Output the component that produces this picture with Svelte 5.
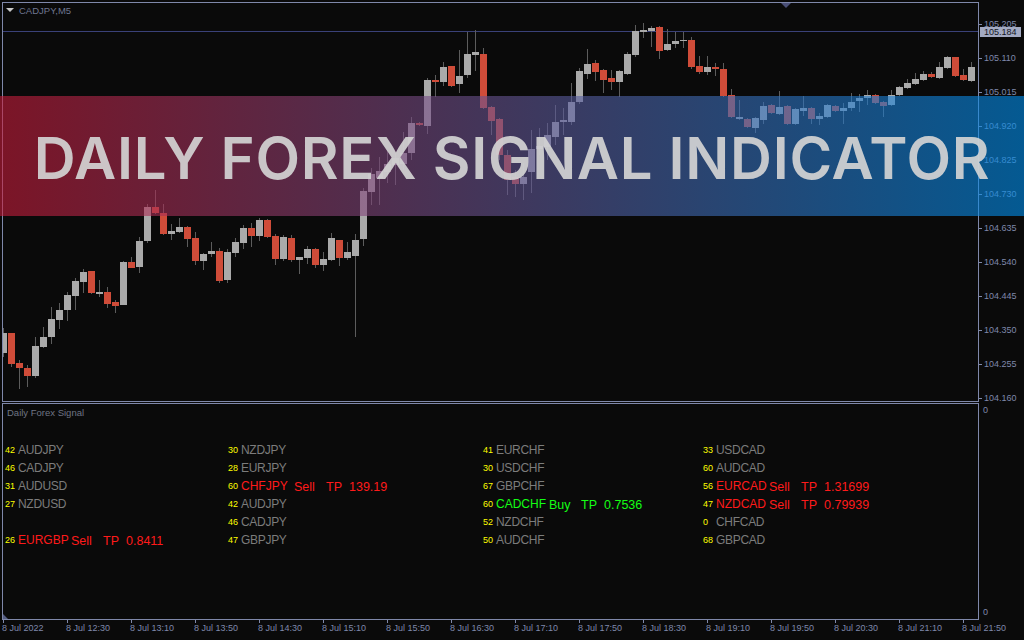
<script>
	// [bodyTop, bodyBottom, wickTop, wickBottom, isRed], one candle every 8px from x=0
	const candles = [
		[333,353,328,357,0],[333,364,333,367,1],[363,368,360,389,1],[368,376,365,387,1],[346,376,337,378,0],
		[337,347,327,348,0],[319,337,307,344,0],[310,320,303,329,0],[295,310,292,321,0],[281,296,278,310,0],
		[272,282,269,293,0],[271,293,271,294,1],[292,294,280,297,0],[292,304,287,308,1],[302,306,300,313,1],
		[262,305,261,305,0],[262,268,257,268,1],[241,267,237,273,0],[207,241,204,243,0],[207,213,190,214,1],
		[213,234,204,235,1],[231,234,224,240,0],[227,232,218,233,0],[227,239,226,247,1],[238,261,232,265,1],
		[254,261,253,270,0],[251,254,242,257,0],[251,281,248,283,1],[252,280,249,283,0],[242,253,238,257,0],
		[228,243,225,249,0],[228,236,223,247,1],[220,236,218,241,0],[220,237,219,238,1],[236,259,234,265,1],
		[237,259,235,261,0],[238,260,235,262,1],[257,260,257,274,0],[249,258,246,264,0],[249,265,248,268,1],
		[259,265,252,271,0],[238,260,233,261,0],[240,258,240,266,1],[252,258,242,260,0],[240,256,234,337,0],
		[191,239,188,246,0],[174,192,168,205,0],[171,178,157,205,0],[164,172,150,183,0],[158,165,153,185,0],
		[153,164,132,170,0],[123,153,117,160,0],[123,125,122,126,1],[80,126,78,134,0],[80,82,75,97,1],
		[67,82,62,86,0],[66,86,66,87,1],[76,84,50,93,0],[54,75,32,78,0],[52,55,30,71,0],
		[54,108,48,109,1],[107,121,106,135,1],[119,155,118,160,1],[155,180,150,195,1],[177,184,170,197,1],
		[177,184,163,200,0],[149,172,130,193,0],[146,149,128,155,0],[135,147,123,160,0],[122,137,105,145,0],
		[120,122,108,135,0],[102,122,83,125,0],[71,102,68,104,0],[64,74,49,79,0],[63,72,60,81,1],
		[70,80,69,93,1],[78,82,70,90,1],[71,82,70,97,0],[54,74,52,75,0],[31,55,25,57,0],
		[30,32,23,38,0],[28,31,26,47,0],[27,51,26,59,1],[44,50,29,51,0],[41,44,32,48,0],
		[40,41,32,48,0],[40,67,37,69,1],[66,72,56,74,1],[67,72,56,75,0],[67,69,63,76,1],
		[69,96,63,97,1],[95,117,89,118,1],[117,119,100,120,0],[119,127,118,128,1],[118,128,117,133,0],
		[106,120,102,124,0],[105,113,104,114,1],[107,114,91,115,0],[106,124,105,125,1],[109,124,108,125,0],
		[108,111,96,116,0],[108,119,107,124,1],[116,119,113,125,0],[105,117,104,118,0],[106,111,105,112,1],
		[108,111,103,124,0],[102,108,93,111,0],[98,101,94,112,0],[95,98,90,105,0],[95,103,94,104,1],
		[102,106,101,117,1],[95,105,90,106,0],[87,95,86,96,0],[83,88,79,89,0],[79,84,73,85,0],
		[74,80,71,81,0],[74,77,72,78,1],[67,78,62,79,0],[57,68,56,69,0],[57,76,57,77,1],
		[75,80,69,81,1],[67,81,62,82,0]
	];

	const prices = ['105.205','105.110','105.015','104.920','104.825','104.730','104.635','104.540','104.445','104.350','104.255','104.160'];
	const times = ['8 Jul 2022','8 Jul 12:30','8 Jul 13:10','8 Jul 13:50','8 Jul 14:30','8 Jul 15:10','8 Jul 15:50','8 Jul 16:30','8 Jul 17:10','8 Jul 17:50','8 Jul 18:30','8 Jul 19:10','8 Jul 19:50','8 Jul 20:30','8 Jul 21:10','8 Jul 21:50'];

	const signals = [
		[
			{ n: 42, pair: 'AUDJPY' }, { n: 46, pair: 'CADJPY' }, { n: 31, pair: 'AUDUSD' }, { n: 27, pair: 'NZDUSD' },
			null,
			{ n: 26, pair: 'EURGBP', side: 'Sell', tp: '0.8411' }
		],
		[
			{ n: 30, pair: 'NZDJPY' }, { n: 28, pair: 'EURJPY' }, { n: 60, pair: 'CHFJPY', side: 'Sell', tp: '139.19' },
			{ n: 42, pair: 'AUDJPY' }, { n: 46, pair: 'CADJPY' }, { n: 47, pair: 'GBPJPY' }
		],
		[
			{ n: 41, pair: 'EURCHF' }, { n: 30, pair: 'USDCHF' }, { n: 67, pair: 'GBPCHF' },
			{ n: 60, pair: 'CADCHF', side: 'Buy', tp: '0.7536' }, { n: 52, pair: 'NZDCHF' }, { n: 50, pair: 'AUDCHF' }
		],
		[
			{ n: 33, pair: 'USDCAD' }, { n: 60, pair: 'AUDCAD' }, { n: 56, pair: 'EURCAD', side: 'Sell', tp: '1.31699' },
			{ n: 47, pair: 'NZDCAD', side: 'Sell', tp: '0.79939' }, { n: 0, pair: 'CHFCAD' }, { n: 68, pair: 'GBPCAD' }
		]
	];
</script>

<div class="terminal">
	<div class="chart">
		<svg class="candles" width="975" height="398" viewBox="3 3 975 398" shape-rendering="crispEdges">
			<rect x="3" y="31" width="975" height="1" fill="#3a4178" />
			{#each candles as c, i}
				<rect x={8 * i + 3} y={c[2]} width="1" height={c[3] - c[2]} fill="#5c5c5c" />
				<rect x={8 * i} y={c[0]} width="7" height={c[1] - c[0]} fill={c[4] ? '#cf4c39' : '#aaaaaa'} />
			{/each}
		</svg>
		<div class="symbol"><span class="arrow"></span>CADJPY,M5</div>
		<span class="shift-mark"></span>
	</div>

	<div class="price-axis">
		{#each prices as p}
			<div class="price"><span class="tick"></span>{p}</div>
		{/each}
		<div class="bid">105.184</div>
	</div>

	<div class="sub">
		<div class="sub-title">Daily Forex Signal</div>
		<div class="board">
			{#each signals as column}
				<div class="column">
					{#each column as row}
						<div class="row">
							{#if row}
								<span class="num">{row.n}</span>
								<span class="pair" class:sell={row.side === 'Sell'} class:buy={row.side === 'Buy'}>{row.pair}</span>
								{#if row.side}
									<span class="trade" class:sell={row.side === 'Sell'} class:buy={row.side === 'Buy'}>
										<span class="side">{row.side}</span>
										<span class="tp">TP</span>
										<span>{row.tp}</span>
									</span>
								{/if}
							{/if}
						</div>
					{/each}
				</div>
			{/each}
		</div>
		<span class="corner"></span>
	</div>

	<div class="sub-axis">
		<span class="zero">0</span>
		<span class="zero">0</span>
	</div>

	<div class="time-axis">
		{#each times as t}
			<div class="time"><span class="tick"></span>{t}</div>
		{/each}
	</div>

	<div class="banner">
		<h1>DAILY FOREX SIGNAL INDICATOR</h1>
	</div>
</div>

<style>
	:global(body) {
		background: #0a0a0a;
	}

	.terminal {
		position: relative;
		width: 1024px;
		height: 640px;
		overflow: hidden;
		box-sizing: border-box;
		padding: 2px 0 0 2px;
		display: grid;
		grid-template-columns: 977px 45px;
		grid-template-rows: 400px 217px 21px;
		row-gap: 1px;
		background: #0a0a0a;
		color: #7f88aa;
		font: 9px "Liberation Sans", Arial, sans-serif;
	}

	.chart {
		position: relative;
		border: 1px solid #7f88aa;
		overflow: hidden;
	}

	.candles {
		display: block;
	}

	.symbol {
		position: absolute;
		top: 1px;
		left: 3px;
		display: flex;
		align-items: center;
		gap: 5px;
		height: 12px;
		font-size: 9.5px;
		color: #6f7791;
	}

	.arrow {
		width: 0;
		height: 0;
		border: 4px solid transparent;
		border-top: 4px solid #c9c9c9;
		border-bottom: 0;
	}

	.shift-mark {
		position: absolute;
		top: 0;
		left: 778px;
		width: 0;
		height: 0;
		border: 5px solid transparent;
		border-top: 5px solid #4a4f77;
		border-bottom: 0;
	}

	.price-axis {
		position: relative;
		padding-top: 5px;
	}

	.price {
		position: relative;
		height: 34px;
		display: flex;
		align-items: center;
		padding-left: 5px;
	}

	.price .tick {
		position: absolute;
		left: 0;
		top: 17px;
		width: 3px;
		height: 1px;
		background: #7f88aa;
	}

	.bid {
		position: absolute;
		top: 25px;
		left: 1px;
		width: 41px;
		height: 10px;
		line-height: 10px;
		padding-left: 4px;
		box-sizing: border-box;
		background: #a3aac2;
		color: #14161f;
	}

	.sub {
		position: relative;
		border: 1px solid #7f88aa;
		padding: 2px 0 0 2px;
	}

	.sub-title {
		height: 35px;
		padding-left: 2px;
		line-height: 13px;
		font-size: 9.5px;
		color: #6f7584;
	}

	.board {
		display: grid;
		grid-template-columns: 223px 255px 220px 1fr;
	}

	.row {
		display: flex;
		align-items: center;
		height: 18px;
	}

	.num {
		width: 13px;
		color: #ffff00;
	}

	.pair {
		width: 53px;
		font-size: 12px;
		letter-spacing: -0.3px;
		color: #7c7c7c;
	}

	.pair.sell,
	.pair.buy {
		letter-spacing: 0;
	}

	.trade {
		display: flex;
		padding-top: 2px;
		font-size: 12.5px;
	}

	.side {
		width: 32px;
	}

	.tp {
		width: 23px;
	}

	.sell {
		color: #ff1a1a;
	}

	.buy {
		color: #14ff14;
	}

	.corner {
		position: absolute;
		left: 0;
		bottom: 0;
		width: 0;
		height: 0;
		border-left: 5px solid #555d82;
		border-top: 5px solid transparent;
	}

	.sub-axis {
		display: flex;
		flex-direction: column;
		justify-content: space-between;
		padding: 1px 0 2px 4px;
	}

	.zero {
		line-height: 12px;
	}

	.time-axis {
		grid-column: 1 / -1;
		display: flex;
	}

	.time {
		position: relative;
		flex: 0 0 64px;
		padding-top: 1px;
		white-space: nowrap;
		line-height: 12px;
	}

	.time .tick {
		position: absolute;
		left: 1px;
		top: -1px;
		width: 1px;
		height: 3px;
		background: #7f88aa;
	}

	.banner {
		position: absolute;
		left: 0;
		right: 0;
		top: 96px;
		height: 120px;
		display: flex;
		align-items: center;
		justify-content: center;
		background: linear-gradient(90deg, rgba(200, 28, 58, 0.6), rgba(0, 143, 237, 0.6));
	}

	h1 {
		margin: 4px 0 0;
		font: 600 58px Inter, "Noto Sans", sans-serif;
		letter-spacing: 0.7px;
		white-space: nowrap;
		color: rgba(212, 212, 212, 0.92);
	}
</style>
